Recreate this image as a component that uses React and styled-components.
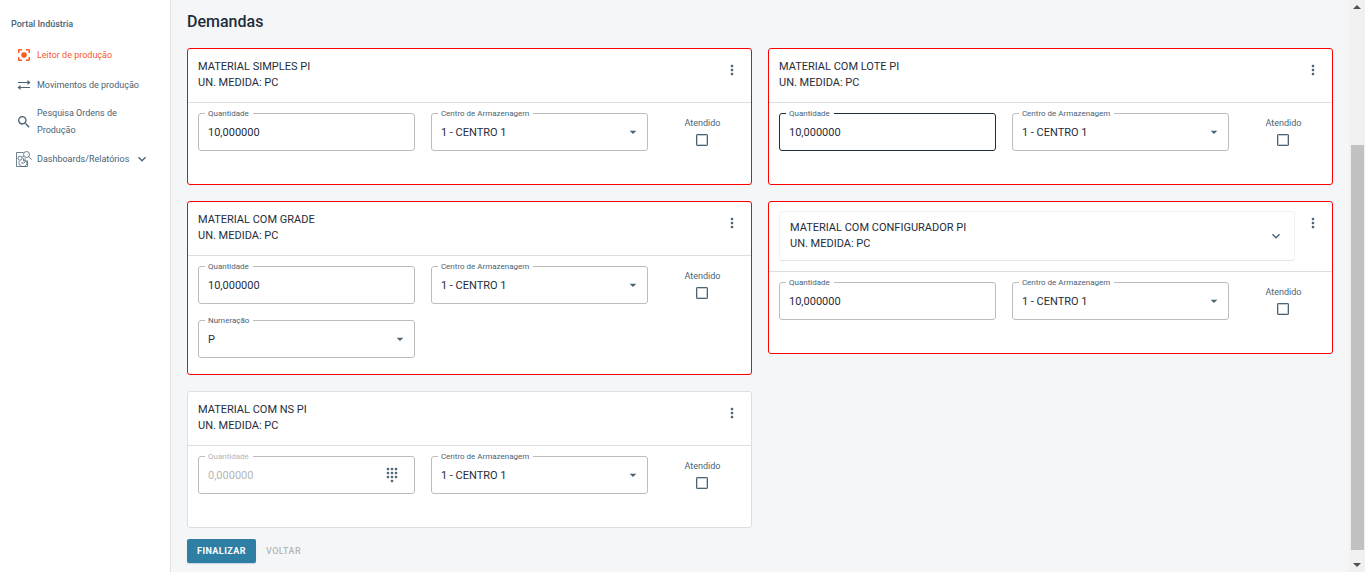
import React, { useId, useState } from "react";
import styled, { createGlobalStyle, css } from "styled-components";
import { MdArrowDropDown, MdDialpad, MdExpandMore, MdMoreVert, MdSearch } from "react-icons/md";

const color = {
  text: "#1f2d3a",
  muted: "#4a6375",
  line: "#dcdfe0",
  field: "#bdbdbd",
  page: "#f4f6f8",
  alert: "#ff0000",
  orange: "#fa5a1e",
  primary: "#2f7ea3",
  disabled: "#b4b6b8",
};

const GlobalStyle = createGlobalStyle`
  *, *::before, *::after { box-sizing: border-box; }
  body {
    margin: 0;
    background: ${color.page};
    color: ${color.text};
    font-family: Roboto, "Liberation Sans", sans-serif;
    font-size: 11px;
  }
  button, input, select { font: inherit; color: inherit; }
`;

const Page = styled.div`
  display: flex;
  min-height: 100vh;
`;

const Sidebar = styled.nav`
  flex: 0 0 171px;
  min-width: 0;
  padding-top: 16px;
  background: #fff;
  border-right: 1px solid #dfe2e5;
  color: ${color.muted};
`;

const SidebarTitle = styled.div`
  padding-left: 11px;
  height: 24px;
  font-size: 9px;
  line-height: 16px;
  font-weight: 500;
`;

const NavLink = styled.a`
  display: flex;
  align-items: center;
  gap: 5px;
  min-height: 30px;
  padding: 5px 16px;
  font-size: 9px;
  line-height: 17px;
  color: ${(p) => (p.$active ? color.orange : color.muted)};
  text-decoration: none;
  svg { flex: none; }
`;

const NavText = styled.span`
  max-width: 108px;
`;

const Content = styled.main`
  flex: 1;
  min-width: 0;
  padding: 12px 16px 9px;
`;

const Title = styled.h1`
  margin: 0 0 16px;
  font-size: 16px;
  line-height: 20px;
  font-weight: 500;
`;

const Columns = styled.div`
  display: grid;
  grid-template-columns: 1fr 1fr;
  align-items: start;
  gap: 16px;
`;

const Column = styled.div`
  display: grid;
  gap: 16px;
`;

const Card = styled.section`
  background: #fff;
  border: 1px solid ${(p) => (p.$alert ? color.alert : color.line)};
  border-radius: 3px;
`;

const CardHeader = styled.header`
  display: flex;
  align-items: flex-start;
  gap: 9px;
  padding: 9px 10px 10px;
  border-bottom: 1px solid ${color.line};
`;

const Material = styled.div`
  flex: 1;
  min-height: 34px;
  padding-top: 1px;
  line-height: 16px;
  text-align: left;
`;

const Accordion = styled.button`
  flex: 1;
  display: flex;
  align-items: center;
  height: 50px;
  padding: 7px 10px;
  background: #fff;
  border: 1px solid #f0f1f2;
  border-bottom-color: #e2e4e5;
  border-radius: 3px;
`;

const IconButton = styled.button`
  display: flex;
  align-items: center;
  justify-content: center;
  width: 18px;
  height: 24px;
  padding: 0;
  border: 0;
  background: none;
  color: ${color.muted};
  svg { flex: none; }
`;

const CardBody = styled.div`
  display: grid;
  grid-template-columns: repeat(12, 1fr);
  align-content: start;
  gap: 16px;
  min-height: 81px;
  padding: 10px 10px 16px;
`;

const FieldBox = styled.div`
  grid-column: span 5;
  position: relative;
  display: flex;
  align-items: center;
  height: 38px;
  border: 1px solid ${(p) => (p.$focused ? color.text : color.field)};
  border-radius: 3px;
  color: ${(p) => (p.$disabled ? color.disabled : color.text)};
  > svg {
    position: absolute;
    right: 6px;
    color: ${color.muted};
    pointer-events: none;
  }
  > button { margin-right: 13px; }
`;

const FieldLabel = styled.label`
  position: absolute;
  top: -5px;
  left: 6px;
  padding: 0 4px 0 3px;
  background: #fff;
  font-size: 8px;
  line-height: 10px;
  color: ${(p) => (p.$disabled ? color.disabled : color.muted)};
`;

const control = css`
  flex: 1;
  min-width: 0;
  width: 100%;
  height: 100%;
  padding: 0 9px;
  border: 0;
  outline: 0;
  background: none;
  appearance: none;
`;

const Input = styled.input`${control}`;
const Select = styled.select`${control}`;

const Check = styled.label`
  grid-column: span 2;
  display: flex;
  flex-direction: column;
  align-items: center;
  gap: 5px;
  padding-top: 4px;
  font-size: 9px;
  line-height: 12px;
  color: ${color.muted};
`;

const Checkbox = styled.input`
  appearance: none;
  width: 12px;
  height: 12px;
  margin: 0;
  border: 1px solid ${color.muted};
  border-radius: 1px;
  box-shadow: inset 0 0 0 1px #c3ccd2;
  &:checked { background: ${color.muted}; }
`;

const Actions = styled.div`
  display: flex;
  margin-top: 11px;
`;

const Button = styled.button`
  height: 24px;
  padding: 0 10px;
  border: 0;
  border-radius: 2px;
  font-size: 9px;
  font-weight: ${(p) => (p.$primary ? 700 : 500)};
  letter-spacing: 0.05em;
  background: ${(p) => (p.$primary ? color.primary : "none")};
  color: ${(p) => (p.$primary ? "#fff" : color.disabled)};
  box-shadow: ${(p) => (p.$primary ? "0 1px 1px #c9d3d9" : "none")};
`;

const Scrollbar = styled.div`
  position: sticky;
  top: 0;
  flex: 0 0 16px;
  display: flex;
  flex-direction: column;
  align-items: center;
  height: 100vh;
  background: #f1f1f1;
  color: #505050;
`;

const ScrollArrow = styled.svg`
  flex: none;
  width: 16px;
  height: 17px;
`;

const ScrollSpace = styled.div`
  flex: ${(p) => p.$share} 0 0;
`;

const ScrollThumb = styled.div`
  flex: 405 0 0;
  width: 13px;
  background: #c1c1c1;
`;

const ScanIcon = () => (
  <svg width="16" height="16" viewBox="0 0 16 16" fill="none" stroke="currentColor" strokeWidth="1.5">
    <path d="M2.7 6V3.4q0-.7.7-.7H6M10 2.7h2.6q.7 0 .7.7V6M13.3 10v2.6q0 .7-.7.7H10M6 13.3H3.4q-.7 0-.7-.7V10" />
    <circle cx="8" cy="8" r="2.8" fill="currentColor" stroke="none" />
  </svg>
);

const TransferIcon = () => (
  <svg width="16" height="16" viewBox="0 0 16 16" fill="none" stroke="currentColor" strokeWidth="1.2">
    <path d="M2 5.5h10M4 10.5h10" />
    <path d="M11.5 3v5L14.5 5.5zM4.5 8v5L1.5 10.5z" fill="currentColor" stroke="none" />
  </svg>
);

const ReportIcon = () => (
  <svg width="16" height="16" viewBox="0 0 16 16" fill="none" stroke="currentColor" strokeWidth="0.8">
    <path d="M7.5 1.5h-7v14h11V9.5" />
    <circle cx="10.5" cy="3.5" r="3" />
    <path d="M12.8 5.6l2.8 3" />
    <circle cx="4" cy="7.2" r="2" />
    <path d="M6 6.5l2-1.5M3.4 9.8a4 4 0 1 0 7 0H7.5V7.3M9 7.2v2.6M5 12h3l1.8-1.8" />
  </svg>
);

function TextField({ label, value, disabled, focused }) {
  const id = useId();
  return (
    <FieldBox $disabled={disabled} $focused={focused}>
      <FieldLabel htmlFor={id} $disabled={disabled}>{label}</FieldLabel>
      <Input id={id} defaultValue={value} disabled={disabled} />
      {disabled && (
        <IconButton type="button" aria-label="Informar números de série">
          <MdDialpad size={16} />
        </IconButton>
      )}
    </FieldBox>
  );
}

function SelectField({ label, value }) {
  const id = useId();
  return (
    <FieldBox>
      <FieldLabel htmlFor={id}>{label}</FieldLabel>
      <Select id={id} defaultValue={value}>
        <option>{value}</option>
      </Select>
      <MdArrowDropDown size={16} />
    </FieldBox>
  );
}

function DemandCard({ name, quantity = "10,000000", size, focused, pending, configurable }) {
  const [open, setOpen] = useState(false);
  const material = (
    <Material as={configurable ? "span" : "div"}>
      {name}
      <br />
      UN. MEDIDA: PC
    </Material>
  );
  return (
    <Card $alert={!pending}>
      <CardHeader>
        {configurable ? (
          <Accordion type="button" aria-expanded={open} onClick={() => setOpen(!open)}>
            {material}
            <MdExpandMore size={16} color={color.muted} />
          </Accordion>
        ) : (
          material
        )}
        <IconButton type="button" aria-label="Mais opções">
          <MdMoreVert size={16} />
        </IconButton>
      </CardHeader>
      <CardBody>
        <TextField label="Quantidade" value={quantity} disabled={pending} focused={focused} />
        <SelectField label="Centro de Armazenagem" value="1 - CENTRO 1" />
        <Check>
          Atendido
          <Checkbox type="checkbox" />
        </Check>
        {size && <SelectField label="Numeração" value={size} />}
      </CardBody>
    </Card>
  );
}

export default function App() {
  return (
    <Page>
      <GlobalStyle />
      <Sidebar>
        <SidebarTitle>Portal Indústria</SidebarTitle>
        <NavLink href="#leitor" $active><ScanIcon /><NavText>Leitor de produção</NavText></NavLink>
        <NavLink href="#movimentos"><TransferIcon /><NavText>Movimentos de produção</NavText></NavLink>
        <NavLink href="#ordens"><MdSearch size={16} /><NavText>Pesquisa Ordens de<br />Produção</NavText></NavLink>
        <NavLink href="#relatorios">
          <ReportIcon /><NavText>Dashboards/Relatórios</NavText><MdExpandMore size={16} />
        </NavLink>
      </Sidebar>
      <Content>
        <Title>Demandas</Title>
        <Columns>
          <Column>
            <DemandCard name="MATERIAL SIMPLES PI" />
            <DemandCard name="MATERIAL COM GRADE" size="P" />
            <DemandCard name="MATERIAL COM NS PI" quantity="0,000000" pending />
          </Column>
          <Column>
            <DemandCard name="MATERIAL COM LOTE PI" focused />
            <DemandCard name="MATERIAL COM CONFIGURADOR PI" configurable />
          </Column>
        </Columns>
        <Actions>
          <Button type="button" $primary>FINALIZAR</Button>
          <Button type="button">VOLTAR</Button>
        </Actions>
      </Content>
      <Scrollbar aria-hidden="true">
        <ScrollArrow viewBox="0 0 16 17"><path d="M8 5l4 4H4z" fill="currentColor" /></ScrollArrow>
        <ScrollSpace $share={128} />
        <ScrollThumb />
        <ScrollSpace $share={5} />
        <ScrollArrow viewBox="0 0 16 17"><path d="M8 12l4-4H4z" fill="currentColor" /></ScrollArrow>
      </Scrollbar>
    </Page>
  );
}
